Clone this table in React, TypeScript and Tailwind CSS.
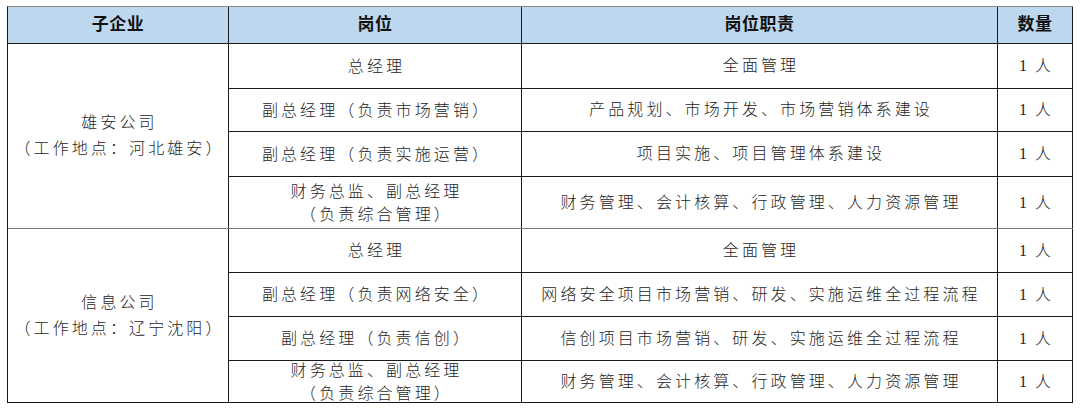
import React from 'react';

interface Row {
  post: string[];
  duty: string;
  count: string;
  h: string;
}

interface Group {
  name: string;
  place: string;
  rows: Row[];
}

const groups: Group[] = [
  {
    name: '雄安公司',
    place: '（工作地点：河北雄安）',
    rows: [
      { post: ['总经理'], duty: '全面管理', count: '1 人', h: 'h-[45px]' },
      { post: ['副总经理（负责市场营销）'], duty: '产品规划、市场开发、市场营销体系建设', count: '1 人', h: 'h-[43px]' },
      { post: ['副总经理（负责实施运营）'], duty: '项目实施、项目管理体系建设', count: '1 人', h: 'h-[45px]' },
      { post: ['财务总监、副总经理', '（负责综合管理）'], duty: '财务管理、会计核算、行政管理、人力资源管理', count: '1 人', h: 'h-[51px]' },
    ],
  },
  {
    name: '信息公司',
    place: '（工作地点：辽宁沈阳）',
    rows: [
      { post: ['总经理'], duty: '全面管理', count: '1 人', h: 'h-[44px]' },
      { post: ['副总经理（负责网络安全）'], duty: '网络安全项目市场营销、研发、实施运维全过程流程', count: '1 人', h: 'h-[44px]' },
      { post: ['副总经理（负责信创）'], duty: '信创项目市场营销、研发、实施运维全过程流程', count: '1 人', h: 'h-[44px]' },
      { post: ['财务总监、副总经理', '（负责综合管理）'], duty: '财务管理、会计核算、行政管理、人力资源管理', count: '1 人', h: 'h-[42px]' },
    ],
  },
];

const cell = 'flex flex-col items-center justify-center text-center border-r border-b border-[#1a1a1a]';

export default function App() {
  return (
    <div
      className="w-[1080px] h-[417px] bg-white pt-[6px] pl-[7px] text-[#262626]"
      style={{ fontFamily: '"Liberation Serif", "Noto Sans CJK SC", serif' }}
    >
      <div className="w-[1066px] border-l border-t border-l-[#1a1a1a] border-t-[#8a8a8a]">
        <div className="grid grid-cols-[221px_293px_476px_75px] h-[37px] bg-[#bdd7ee] text-[17px] font-bold tracking-[0.5px] text-[#111]">
          <div className={cell}>子企业</div>
          <div className={cell}>岗位</div>
          <div className={cell}>岗位职责</div>
          <div className={cell}>数量</div>
        </div>
        {groups.map((g, gi) => (
          <div
            key={g.name}
            className={`grid grid-cols-[221px_293px_476px_75px] text-[16px] font-light tracking-[3.1px] ${
              gi === 0 ? 'border-b border-[#7a7a7a]' : ''
            }`}
          >
            <div
              className={`${cell} pl-[3px] leading-[26px] ${gi === 0 ? 'border-b-0' : ''}`}
              style={{ gridRow: 'span 4 / span 4' }}
            >
              <div>{g.name}</div>
              <div>{g.place}</div>
            </div>
            {g.rows.map((r, ri) => {
              const last = ri === g.rows.length - 1 && gi === 0;
              const b = last ? 'border-b-0' : '';
              return (
                <React.Fragment key={ri}>
                  <div className={`${cell} ${r.h} ${b} pl-[3px] leading-[23px]`}>
                    {r.post.map((p) => (
                      <div key={p}>{p}</div>
                    ))}
                  </div>
                  <div className={`${cell} ${r.h} ${b} pl-[3px]`}>{r.duty}</div>
                  <div className={`${cell} ${r.h} ${b} pl-[2px] tracking-[2px]`}>{r.count}</div>
                </React.Fragment>
              );
            })}
          </div>
        ))}
      </div>
    </div>
  );
}
